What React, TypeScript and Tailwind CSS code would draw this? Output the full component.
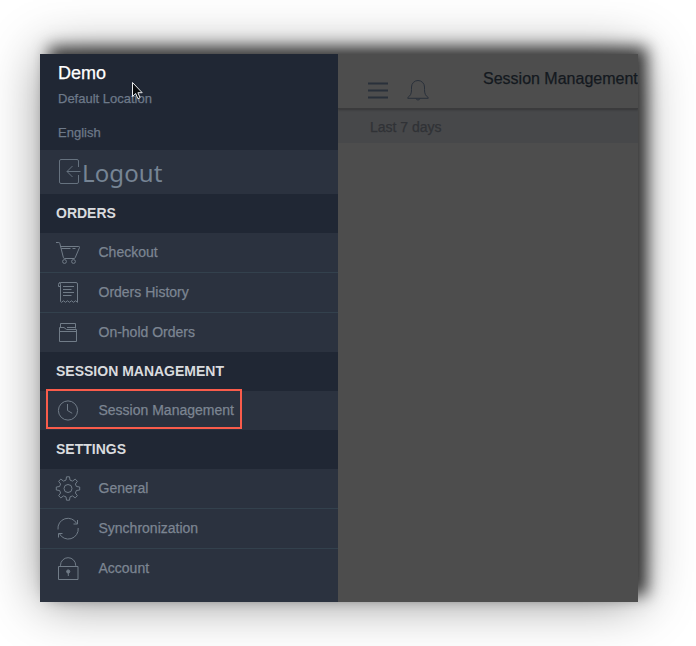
import React from "react";

type IconProps = { children: React.ReactNode };

function Icon({ children }: IconProps) {
  return (
    <svg className="block h-7 w-7 shrink-0 text-[#717c88]" viewBox="0 0 28 28" fill="none" stroke="currentColor" strokeWidth="1">
      {children}
    </svg>
  );
}

const cart = (
  <Icon>
    <path d="M2 4.5h2.800q.8 0 1 .8l3.500 14q.2 1.200 1.400 1.200h9.300q.9 0 1.200-.8L25.500 9.500q.3-1-.7-1H6.600M7.200 10.500h9.300M18.500 10.500h3" />
    <circle cx="10.500" cy="23.500" r="1.900" />
    <circle cx="19.500" cy="23.500" r="1.900" />
  </Icon>
);
const receipt = (
  <Icon>
    <path d="M6.500 8.500H4.500V6.500q0-2 2-2H22q1.500 0 1.500 1.500v18.300l-2-1.500-2 1.500-2-1.500-2 1.500-2-1.500-2 1.500-2-1.500-2 1.500-1-.7V6.500q0-2-1.200-2M9 8.500h11M9 11.500h8.500M9 14.500h11M9 17.500h8.500" />
  </Icon>
);
const folder = (
  <Icon>
    <path d="M6.500 9.500v-4h15v5M5.500 9.500h4.500l2.500 2h10v12h-17zM5.500 13.500h17M13 9.500h8.500" />
  </Icon>
);
const clock = (
  <Icon>
    <circle cx="14" cy="14.500" r="9.600" />
    <path d="M13.500 8v6.500l4.700 2.800" />
  </Icon>
);
const gear = (
  <Icon>
    <circle cx="14" cy="14.500" r="4" />
    <path strokeLinejoin="round" d="M12.500 2.800h3l.5 3.300 2.500 1 2.700-2 2.200 2.200-2 2.700 1 2.500 3.300.5v3l-3.300.5-1 2.500 2 2.700-2.200 2.200-2.700-2-2.500 1-.5 3.300h-3l-.5-3.300-2.500-1-2.700 2-2.200-2.200 2-2.700-1-2.500-3.300-.5v-3l3.300-.5 1-2.500-2-2.700 2.200-2.200 2.700 2 2.500-1z" />
  </Icon>
);
const sync = (
  <Icon>
    <path d="M4 15.500A10 10 0 0 1 22.700 9.500M23.500 6v4h-4M24.200 14A10 10 0 0 1 5.300 19.500M4.500 23.500v-4h4" />
  </Icon>
);
const lock = (
  <Icon>
    <path d="M4.500 12.500h19.500v13h-19.500zM6.500 12.500v-1.200a7.600 7.600 0 0 1 15.200 0v1.200M14.300 18v4" />
    <circle cx="14.200" cy="17.500" r="1.600" fill="currentColor" />
  </Icon>
);

function Section({ title }: { title: string }) {
  return (
    <h2 className="flex h-[39px] items-center bg-[#202734] pb-0.5 pl-4 text-sm font-bold text-[#d9dbde]">{title}</h2>
  );
}

function Row({ icon, label, divider = false }: { icon: React.ReactNode; label: string; divider?: boolean }) {
  return (
    <div className={`flex items-center pb-0.5 pl-3.5 ${divider ? "h-10 border-b border-[#33414d]" : "h-[39px]"}`}>
      {icon}
      <span className="ml-4 pl-[0.5px] text-sm [-webkit-text-stroke:0.25px_currentColor]">{label}</span>
    </div>
  );
}

export default function App() {
  return (
    <div className="h-[646px] w-[696px] overflow-hidden bg-white pt-[54px] pl-10 font-['Liberation_Sans',Arial,sans-serif]">
      <div className="relative flex h-[548px] w-[598px] bg-[#4d4d4d] shadow-[9px_-7px_15px_rgba(0,0,0,0.75),2px_0_50px_rgba(0,0,0,0.42)]">
        <aside className="w-[298px] shrink-0 bg-[#2b323f] text-[#7c8592]">
          <header className="h-24 bg-[#202734] pt-2 pl-[18px] text-[13px] text-[#6d7989]">
            <div className="text-lg leading-[22px] text-white [-webkit-text-stroke:0.25px_currentColor]">Demo</div>
            <div className="mt-1.5 leading-[18px] [-webkit-text-stroke:0.25px_currentColor]">Default Location</div>
            <div className="mt-4 leading-[18px] [-webkit-text-stroke:0.25px_currentColor]">English</div>
          </header>
          <div className="flex h-11 items-start pt-[7px] pl-[18px] text-[#768494]">
            <svg className="mt-px h-7 w-6 shrink-0 text-[#66727f]" viewBox="0 0 24 28" fill="none" stroke="currentColor" strokeWidth="1">
              <path d="M20.500 9V3q0-1.500-1.500-1.500H3Q1.500 1.500 1.500 3v21q0 1.500 1.500 1.500h16q1.500 0 1.500-1.500V17M22.500 13.500H9M14.500 8l-5.500 5.500 5.500 5.500" />
            </svg>
            <span className="font-['Noto_Sans',sans-serif] text-2xl leading-8 tracking-[0.1px]">Logout</span>
          </div>
          <Section title="ORDERS" />
          <Row icon={cart} label="Checkout" divider />
          <Row icon={receipt} label="Orders History" divider />
          <Row icon={folder} label="On-hold Orders" />
          <Section title="SESSION MANAGEMENT" />
          <Row icon={clock} label="Session Management" />
          <Section title="SETTINGS" />
          <Row icon={gear} label="General" divider />
          <Row icon={sync} label="Synchronization" divider />
          <Row icon={lock} label="Account" />
        </aside>
        <main className="min-w-0 flex-1 overflow-hidden">
          <div className="relative flex h-[55px] border-b border-[#3b3b3c] pl-[30px] text-[#29303a] shadow-[0_1px_2px_rgba(0,0,0,0.25)]">
            <svg className="mt-7 h-[18px] w-5 shrink-0" viewBox="0 0 20 18" stroke="currentColor" strokeWidth="2">
              <path d="M0 1.500h20M0 8.500h20M0 15.500h20" />
            </svg>
            <svg className="mt-[25px] ml-[19px] h-6 w-6 shrink-0" viewBox="0 0 24 24" fill="none" stroke="currentColor">
              <path d="M.8 18.500c2.800-1.800 3.700-4 3.700-8V8a6.500 6.500 0 0 1 13 0v2.500c0 4 .9 6.200 3.700 8v.8H.8zM9 19.500q.5 1.500 2 1.500T13 19.500" />
            </svg>
            <h1 className="mt-[15px] ml-[52px] text-base leading-5 whitespace-nowrap text-[#14191f] [-webkit-text-stroke:0.25px_currentColor]">Session Management</h1>
          </div>
          <div className="flex h-[34px] items-center bg-[#47484a] pt-0.5 pl-8 text-sm text-[#303236] [-webkit-text-stroke:0.25px_currentColor]">Last 7 days</div>
        </main>
        <div className="absolute top-[335px] left-1.5 h-10 w-[196px] border-2 border-[#fa5c4b]" />
        <svg className="absolute top-[27px] left-[91px] h-5 w-3" viewBox="0 0 12 20">
          <path d="M1.500 1.500v14l3.200-3 2.200 5.200 2.200-1-2.200-5h4.300z" fill="#080a0d" stroke="#e9ebed" />
        </svg>
      </div>
    </div>
  );
}
